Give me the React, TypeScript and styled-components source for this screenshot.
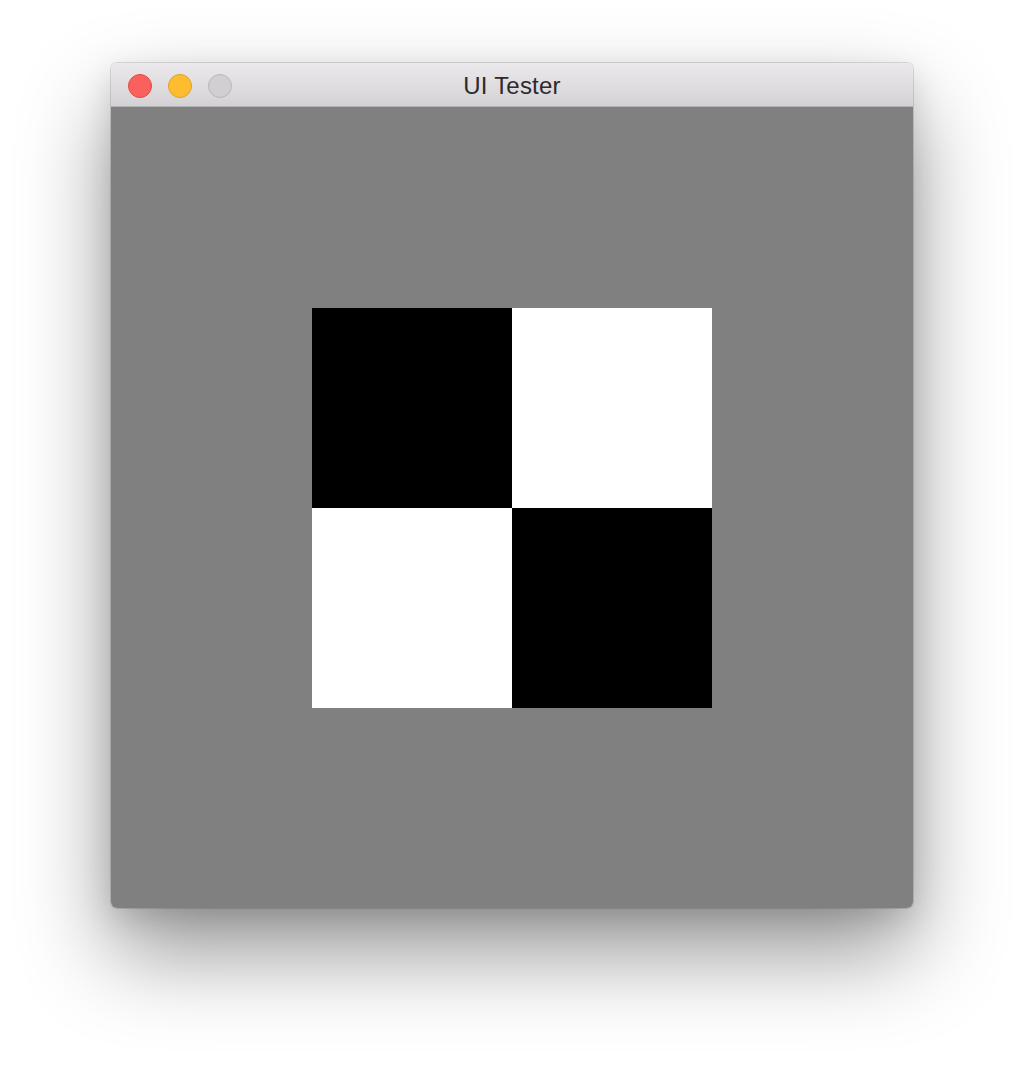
import styled, { createGlobalStyle } from "styled-components";

const GlobalStyle = createGlobalStyle`
  html, body {
    margin: 0;
    padding: 0;
    background: #ffffff;
  }
`;

const Page = styled.div`
  width: 1024px;
  height: 1068px;
  box-sizing: border-box;
  padding: 63px 0 0 111px;
`;

const Window = styled.div`
  width: 802px;
  border-radius: 6px;
  overflow: hidden;
  box-shadow: 0 0 0 1px rgba(0, 0, 0, 0.12), 0 44px 90px rgba(0, 0, 0, 0.42),
    0 10px 30px rgba(0, 0, 0, 0.12);
  display: flex;
  flex-direction: column;
`;

const TitleBar = styled.div`
  height: 43px;
  border-bottom: 1px solid #b4b2b4;
  background: linear-gradient(#ebe9eb, #d4d2d4);
  display: flex;
  align-items: center;
  position: relative;
  padding-left: 17px;
  padding-top: 2px;
  box-sizing: border-box;
  height: 44px;
  gap: 16px;
`;

const Light = styled.span<{ $fill: string; $edge: string }>`
  width: 22px;
  height: 22px;
  border-radius: 50%;
  background: ${(p) => p.$fill};
  border: 1px solid ${(p) => p.$edge};
`;

const Title = styled.div`
  position: absolute;
  left: 0;
  right: 0;
  top: 3px;
  bottom: 0;
  display: flex;
  align-items: center;
  justify-content: center;
  font-family: "Liberation Sans", "Helvetica", sans-serif;
  font-size: 24px;
  letter-spacing: 0.2px;
  color: #2c2a2c;
  pointer-events: none;
`;

const Content = styled.div`
  height: 801px;
  background: #808080;
  display: flex;
  align-items: center;
  justify-content: center;
`;

const Board = styled.div`
  display: grid;
  grid-template-columns: 200px 200px;
  grid-template-rows: 200px 200px;
`;

const Cell = styled.div<{ $dark: boolean }>`
  background: ${(p) => (p.$dark ? "#000000" : "#ffffff")};
`;

export default function App() {
  const cells = [true, false, false, true];
  return (
    <Page>
      <GlobalStyle />
      <Window>
        <TitleBar>
          <Light $fill="#fc605c" $edge="#de4b47" />
          <Light $fill="#fdbd2f" $edge="#dea12b" />
          <Light $fill="#d1cfd1" $edge="#b9b7b9" />
          <Title>UI Tester</Title>
        </TitleBar>
        <Content>
          <Board>
            {cells.map((dark, i) => (
              <Cell key={i} $dark={dark} />
            ))}
          </Board>
        </Content>
      </Window>
    </Page>
  );
}
